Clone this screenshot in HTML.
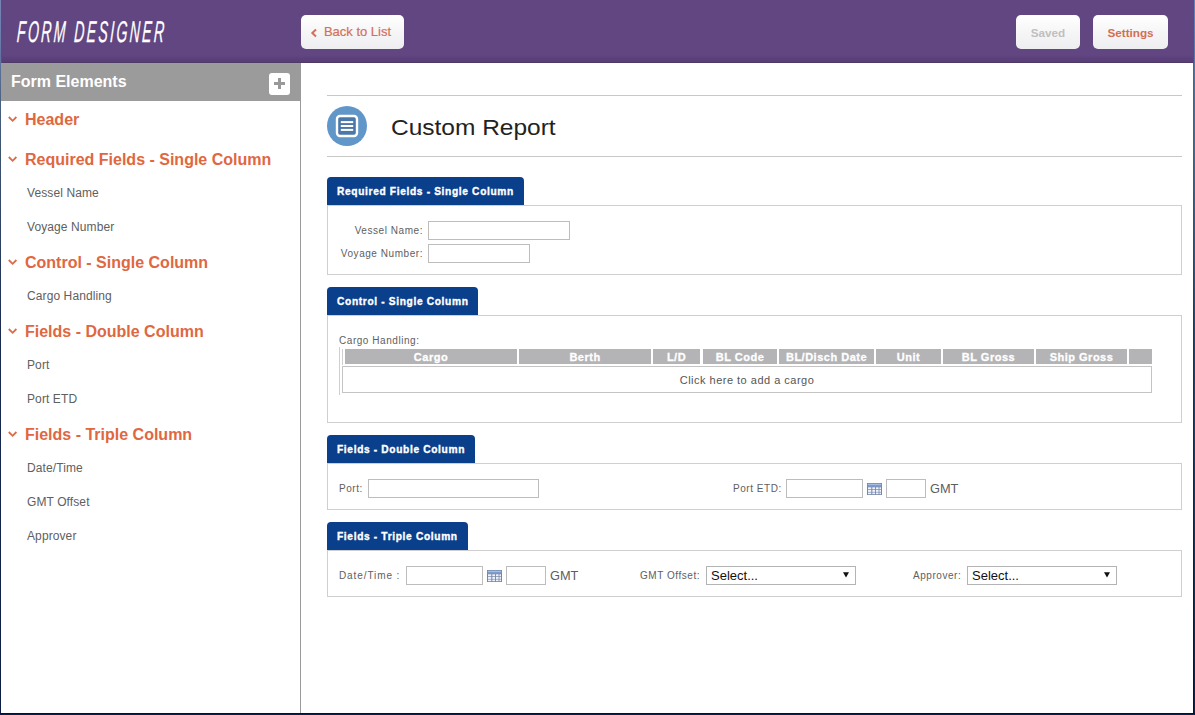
<!DOCTYPE html>
<html><head><meta charset="utf-8">
<style>
*{box-sizing:border-box;margin:0;padding:0}
html,body{width:1195px;height:715px;overflow:hidden;background:#fff;font-family:"Liberation Sans",sans-serif}
.abs{position:absolute}
#frameL{left:0;top:0;width:1px;height:715px;background:linear-gradient(#7784b6 0px,#6a7cad 40px,#4a6282 100px,#3e5570 146px,#1b2b50 337px,#0d1c42 715px)}
#frameR{left:1193px;top:0;width:2px;height:715px;background:linear-gradient(#6282b8 0px,#5b7db3 30px,#4a6e98 97px,#446890 147px,#26456c 337px,#0e2248 715px)}
#frameR:before{content:'';position:absolute;left:0;top:0;width:1px;height:100%;background:linear-gradient(#4b4f8a 0,#4b4f8a 63px,#4e6680 64px,#4a6078 147px,#1f3555 337px,#041230 715px)}
#frameB{left:0;top:713px;width:1195px;height:2px;background:linear-gradient(#041230 0,#041230 1px,#0b2048 1px)}
#hdr{left:1px;top:0;width:1192px;height:63px;background:linear-gradient(#624682 0,#624682 55px,#5b3f7b 59px,#583d78 61.9px,#4f3a66 62px,#4f3a66 63px)}
#logo{left:18px;top:16px;color:#fff;font-style:italic;font-size:30px;line-height:32px;letter-spacing:5px;transform-origin:0 0;transform:scaleX(0.47) skewX(-7deg);-webkit-text-stroke:0.3px #fff;white-space:nowrap}
.btn{position:absolute;top:15px;height:34px;border-radius:5px;background:linear-gradient(#fff,#eeedef);font-weight:bold;font-size:11.7px;text-align:center;line-height:35px;color:#d26f55}
#side{left:1px;top:63px;width:300px;height:650px;border-right:1px solid #9a9a9a;background:#fff}
#sidehd{left:1px;top:63px;width:299px;height:38px;background:linear-gradient(#a597ab 0,#a597ab 1px,#9b9b9b 1px)}
#sidehd span{position:absolute;left:10px;top:10px;color:#fff;font-weight:bold;font-size:16px}
#plus{left:269px;top:73px;width:21px;height:22px;background:#fff;border-radius:3px}
#plus i{position:absolute;background:#999}
.sh{position:absolute;left:25px;color:#e0673f;font-weight:bold;font-size:16px;white-space:nowrap}
.chev{position:absolute;left:8px;width:10px;height:7px}
.si{position:absolute;left:27px;color:#606060;font-size:12px;letter-spacing:0.1px;white-space:nowrap}
.hr{position:absolute;left:327px;width:855px;height:1px;background:#c8c8c8}
#icon{left:327px;top:106px;width:40px;height:40px;border-radius:50%;background:#6196c9}
#title{left:391px;top:115px;font-size:22px;color:#222;white-space:nowrap;transform-origin:0 0;transform:scaleX(1.113)}
.tab{position:absolute;left:327px;height:28px;background:#0a3f8b;border-radius:4px 4px 0 0;color:#fff;font-weight:bold;font-size:10.2px;letter-spacing:0.65px;line-height:30px;padding-left:10px;white-space:nowrap;-webkit-text-stroke:0.35px #fff}
.panel{position:absolute;left:327px;width:855px;border:1px solid #cfcfcf}
.lbl{position:absolute;font-size:10px;letter-spacing:0.55px;color:#606060;white-space:nowrap}
.inp{position:absolute;height:19px;border:1px solid #bdbdbd;background:#fff}
.gh{position:absolute;top:349px;height:15px;background:#b4b4b6;color:#fff;font-weight:bold;font-size:11px;letter-spacing:0.5px;line-height:16px;text-align:center;white-space:nowrap;-webkit-text-stroke:0.3px #fff}
.gmt{position:absolute;font-size:12.8px;color:#5e5e5e}
.sel{position:absolute;height:19px;border:1px solid #b4b4b4;background:#fff;font-size:13px;color:#111;line-height:18px;padding-left:4px}
.sel svg{position:absolute;right:6px;top:5px}
.cal{position:absolute;width:15px;height:12px}
</style></head><body>
<div id="hdr" class="abs"></div>
<div id="logo" class="abs">FORM DESIGNER</div>
<div class="btn" style="left:301px;width:103px;font-weight:normal;font-size:13px;color:#d3705a;padding-left:10px;line-height:33px;-webkit-text-stroke:0.2px #d3705a">Back to List</div>
<svg class="abs" style="left:310px;top:28px" width="8" height="10" viewBox="0 0 8 10"><polyline points="6,1.5 2.3,5 6,8.5" fill="none" stroke="#d3705a" stroke-width="2"/></svg>
<div class="btn" style="left:1016px;width:64px;color:#bfbfbf">Saved</div>
<div class="btn" style="left:1093px;width:75px;">Settings</div>

<div id="side" class="abs"></div>
<div id="sidehd" class="abs"><span>Form Elements</span></div>
<div id="plus" class="abs"><i style="left:5px;top:9px;width:11px;height:3px"></i><i style="left:9px;top:5px;width:3px;height:11px"></i></div>

<svg class="chev" style="top:116px" viewBox="0 0 10 7"><polyline points="0.8,1 4.6,4.8 8.4,1" fill="none" stroke="#dc6b48" stroke-width="1.8"/></svg>
<div class="sh" style="top:111px">Header</div>
<svg class="chev" style="top:156px" viewBox="0 0 10 7"><polyline points="0.8,1 4.6,4.8 8.4,1" fill="none" stroke="#dc6b48" stroke-width="1.8"/></svg>
<div class="sh" style="top:151px">Required Fields - Single Column</div>
<div class="si" style="top:186px">Vessel Name</div>
<div class="si" style="top:220px">Voyage Number</div>
<svg class="chev" style="top:259px" viewBox="0 0 10 7"><polyline points="0.8,1 4.6,4.8 8.4,1" fill="none" stroke="#dc6b48" stroke-width="1.8"/></svg>
<div class="sh" style="top:254px">Control - Single Column</div>
<div class="si" style="top:289px">Cargo Handling</div>
<svg class="chev" style="top:328px" viewBox="0 0 10 7"><polyline points="0.8,1 4.6,4.8 8.4,1" fill="none" stroke="#dc6b48" stroke-width="1.8"/></svg>
<div class="sh" style="top:323px">Fields - Double Column</div>
<div class="si" style="top:358px">Port</div>
<div class="si" style="top:392px">Port ETD</div>
<svg class="chev" style="top:431px" viewBox="0 0 10 7"><polyline points="0.8,1 4.6,4.8 8.4,1" fill="none" stroke="#dc6b48" stroke-width="1.8"/></svg>
<div class="sh" style="top:426px">Fields - Triple Column</div>
<div class="si" style="top:461px">Date/Time</div>
<div class="si" style="top:495px">GMT Offset</div>
<div class="si" style="top:529px">Approver</div>

<div class="hr" style="top:95px"></div>
<div id="icon" class="abs"></div>
<svg class="abs" style="left:327px;top:106px" width="40" height="40" viewBox="0 0 40 40">
<rect x="10" y="10" width="20" height="20" rx="3" fill="#4b78a8" stroke="#fff" stroke-width="2.4"/>
<rect x="13.8" y="15.1" width="12.4" height="2" fill="#fff"/>
<rect x="13.8" y="19" width="12.4" height="2" fill="#fff"/>
<rect x="13.8" y="22.9" width="12.4" height="2" fill="#fff"/>
</svg>
<div id="title" class="abs">Custom Report</div>
<div class="hr" style="top:156px"></div>

<div class="tab" style="top:177px;width:197px">Required Fields - Single Column</div>
<div class="panel" style="top:205px;height:70px"></div>
<div class="lbl" style="right:772px;top:225px">Vessel Name:</div>
<div class="inp" style="left:428px;top:221px;width:142px"></div>
<div class="lbl" style="right:772px;top:248px">Voyage Number:</div>
<div class="inp" style="left:428px;top:244px;width:102px"></div>

<div class="tab" style="top:287px;width:151px">Control - Single Column</div>
<div class="panel" style="top:315px;height:108px"></div>
<div class="lbl" style="left:339px;top:335px">Cargo Handling:</div>
<div class="abs" style="left:339px;top:347px;width:1px;height:48px;background:#cfcfcf"></div>
<div class="abs" style="left:342px;top:349px;width:1px;height:16px;background:#cfcfcf"></div>
<div class="gh" style="left:345px;width:172px">Cargo</div>
<div class="gh" style="left:519px;width:132px">Berth</div>
<div class="gh" style="left:653px;width:47px">L/D</div>
<div class="gh" style="left:703px;width:74px">BL Code</div>
<div class="gh" style="left:779px;width:95px">BL/Disch Date</div>
<div class="gh" style="left:876px;width:65px">Unit</div>
<div class="gh" style="left:943px;width:91px">BL Gross</div>
<div class="gh" style="left:1036px;width:91px">Ship Gross</div>
<div class="gh" style="left:1129px;width:23px"></div>
<div class="abs" style="left:342px;top:366px;width:810px;height:27px;border:1px solid #c4c4c4;font-size:11px;letter-spacing:0.49px;color:#555;text-align:center;line-height:26px">Click here to add a cargo</div>

<div class="tab" style="top:435px;width:148px">Fields - Double Column</div>
<div class="panel" style="top:463px;height:47px"></div>
<div class="lbl" style="left:339px;top:483px">Port:</div>
<div class="inp" style="left:368px;top:479px;width:171px"></div>
<div class="lbl" style="left:733px;top:483px">Port ETD:</div>
<div class="inp" style="left:786px;top:479px;width:77px"></div>
<svg class="cal" style="left:867px;top:483px" viewBox="0 0 15 12"><rect x="0" y="0" width="15" height="12" fill="#7686a8"/><rect x="0.8" y="0.8" width="13.4" height="3" fill="#7e9cca"/><rect x="0.8" y="0.8" width="13.4" height="1.2" fill="#a9bde0"/><g fill="#eef3fc"><rect x="1" y="4.3" width="3.3" height="2"/><rect x="5.3" y="4.3" width="2.8" height="2"/><rect x="9" y="4.3" width="2.6" height="2"/><rect x="12.4" y="4.3" width="1.6" height="2"/><rect x="1" y="7" width="3.3" height="1.9"/><rect x="5.3" y="7" width="2.8" height="1.9"/><rect x="9" y="7" width="2.6" height="1.9"/><rect x="12.4" y="7" width="1.6" height="1.9"/><rect x="1" y="9.5" width="3.3" height="1.7"/><rect x="5.3" y="9.5" width="2.8" height="1.7"/><rect x="9" y="9.5" width="2.6" height="1.7"/><rect x="12.4" y="9.5" width="1.6" height="1.7"/></g></svg>
<div class="inp" style="left:886px;top:479px;width:40px"></div>
<div class="gmt" style="left:930px;top:481px">GMT</div>

<div class="tab" style="top:522px;width:141px">Fields - Triple Column</div>
<div class="panel" style="top:550px;height:47px"></div>
<div class="lbl" style="left:339px;top:570px;letter-spacing:0.9px">Date/Time :</div>
<div class="inp" style="left:406px;top:566px;width:77px"></div>
<svg class="cal" style="left:487px;top:570px" viewBox="0 0 15 12"><rect x="0" y="0" width="15" height="12" fill="#7686a8"/><rect x="0.8" y="0.8" width="13.4" height="3" fill="#7e9cca"/><rect x="0.8" y="0.8" width="13.4" height="1.2" fill="#a9bde0"/><g fill="#eef3fc"><rect x="1" y="4.3" width="3.3" height="2"/><rect x="5.3" y="4.3" width="2.8" height="2"/><rect x="9" y="4.3" width="2.6" height="2"/><rect x="12.4" y="4.3" width="1.6" height="2"/><rect x="1" y="7" width="3.3" height="1.9"/><rect x="5.3" y="7" width="2.8" height="1.9"/><rect x="9" y="7" width="2.6" height="1.9"/><rect x="12.4" y="7" width="1.6" height="1.9"/><rect x="1" y="9.5" width="3.3" height="1.7"/><rect x="5.3" y="9.5" width="2.8" height="1.7"/><rect x="9" y="9.5" width="2.6" height="1.7"/><rect x="12.4" y="9.5" width="1.6" height="1.7"/></g></svg>
<div class="inp" style="left:506px;top:566px;width:40px"></div>
<div class="gmt" style="left:550px;top:568px">GMT</div>
<div class="lbl" style="left:640px;top:570px">GMT Offset:</div>
<div class="sel" style="left:706px;top:566px;width:150px">Select...<svg width="6" height="6" viewBox="0 0 6 6"><path d="M0 0.3H6L3 5.6Z" fill="#111"/></svg></div>
<div class="lbl" style="left:913px;top:570px">Approver:</div>
<div class="sel" style="left:967px;top:566px;width:150px">Select...<svg width="6" height="6" viewBox="0 0 6 6"><path d="M0 0.3H6L3 5.6Z" fill="#111"/></svg></div>

<div id="frameL" class="abs"></div>
<div class="abs" style="left:1px;top:0;width:1px;height:63px;background:#564b84"></div>
<div id="frameR" class="abs"></div>
<div id="frameB" class="abs"></div>
</body></html>
